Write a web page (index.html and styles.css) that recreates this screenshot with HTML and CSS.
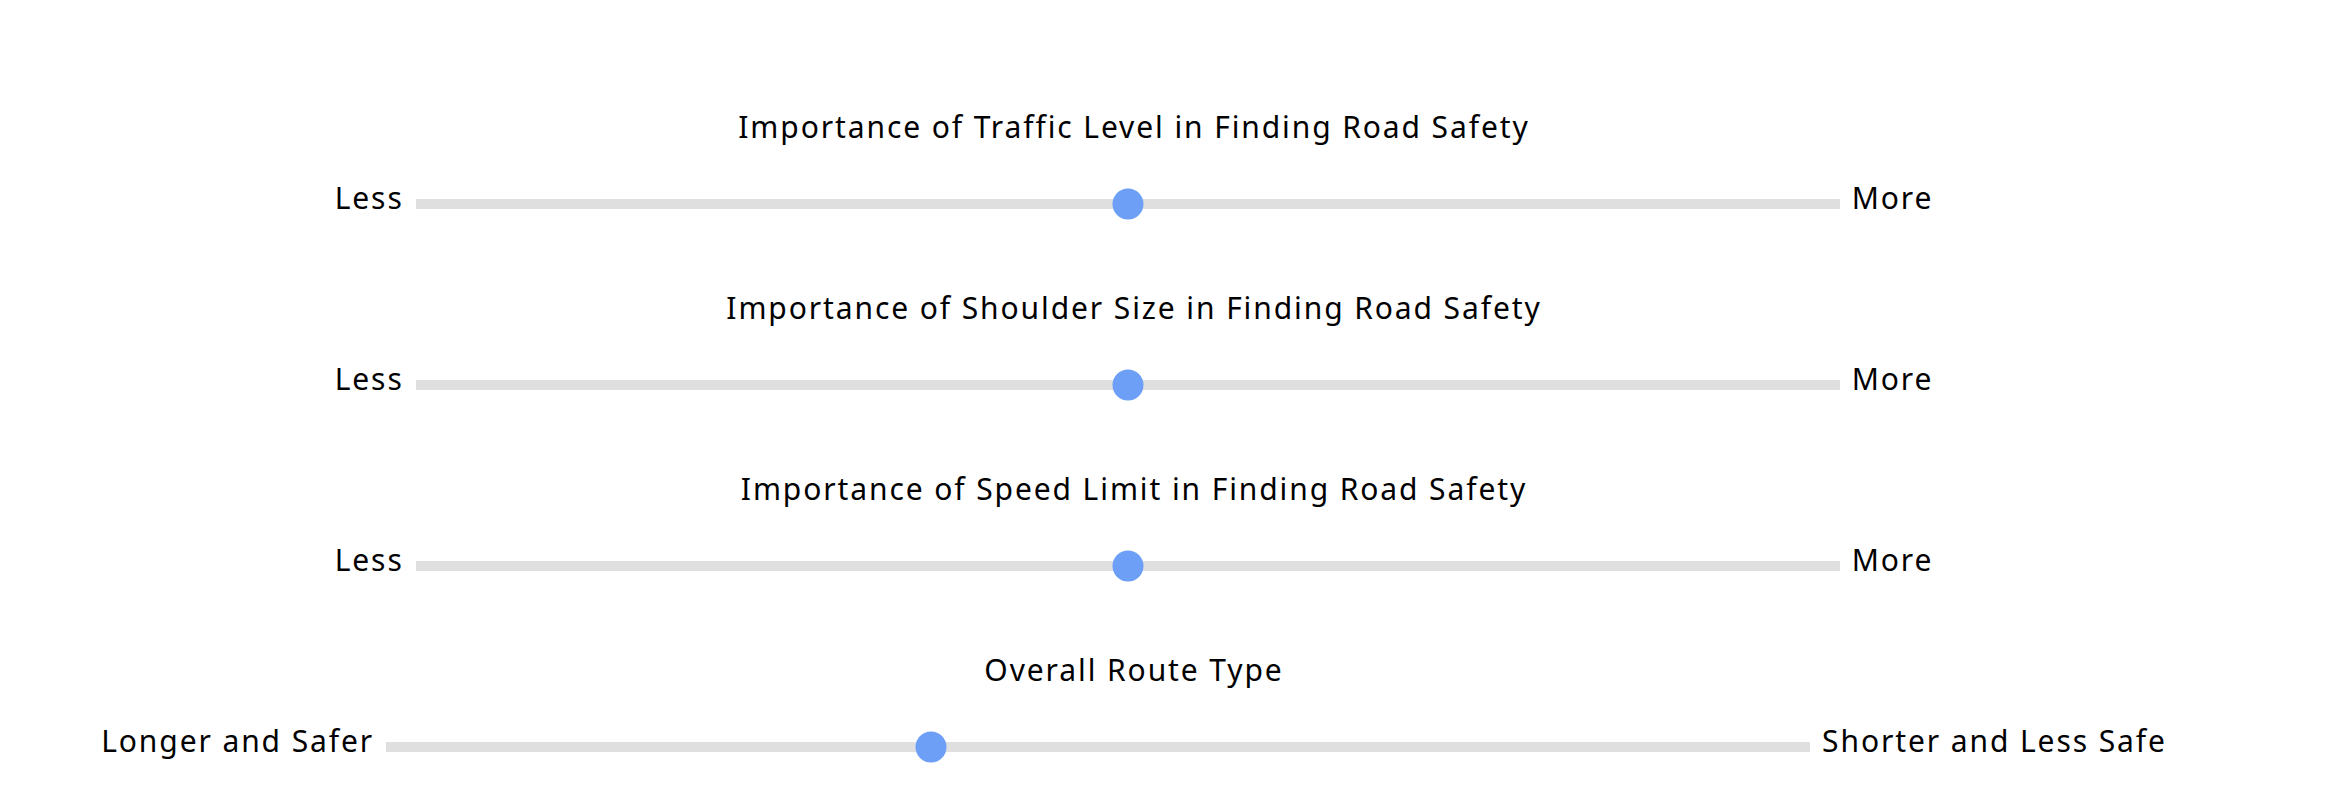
FILE: index.html
```html
<!DOCTYPE html>
<html lang="en">
<head>
<meta charset="utf-8">
<title>Route Preferences</title>
<link rel="stylesheet" href="styles.css">
</head>
<body>
<main class="page">
  <section class="setting">
    <h2 class="setting-title">Importance of Traffic Level in Finding Road Safety</h2>
    <div class="slider-row">
      <span class="end-label">Less</span>
      <div class="track"><span class="thumb" style="left:50%"></span></div>
      <span class="end-label">More</span>
    </div>
  </section>
  <section class="setting">
    <h2 class="setting-title">Importance of Shoulder Size in Finding Road Safety</h2>
    <div class="slider-row">
      <span class="end-label">Less</span>
      <div class="track"><span class="thumb" style="left:50%"></span></div>
      <span class="end-label">More</span>
    </div>
  </section>
  <section class="setting">
    <h2 class="setting-title">Importance of Speed Limit in Finding Road Safety</h2>
    <div class="slider-row">
      <span class="end-label">Less</span>
      <div class="track"><span class="thumb" style="left:50%"></span></div>
      <span class="end-label">More</span>
    </div>
  </section>
  <section class="setting">
    <h2 class="setting-title">Overall Route Type</h2>
    <div class="slider-row">
      <span class="end-label">Longer and Safer</span>
      <div class="track"><span class="thumb" style="left:38.25%"></span></div>
      <span class="end-label">Shorter and Less Safe</span>
    </div>
  </section>
</main>
</body>
</html>
```
FILE: styles.css
```css
html, body {
  margin: 0;
  padding: 0;
  background: #ffffff;
}

body {
  font-family: "Noto Sans", "Open Sans", sans-serif;
  color: #000000;
  letter-spacing: 1.9px;
}

.page {
  width: 2268px;
  padding-top: 107px;
  display: flex;
  flex-direction: column;
  align-items: center;
}

.setting {
  height: 181px;
  display: flex;
  flex-direction: column;
  align-items: center;
}

.setting-title {
  margin: 0;
  font-size: 30px;
  font-weight: 400;
  line-height: 40px;
  text-align: center;
}

.slider-row {
  margin-top: 41px;
  height: 32px;
  display: flex;
  align-items: center;
  gap: 12px;
}

.end-label {
  font-size: 30px;
  line-height: 40px;
  margin-bottom: 12px;
  white-space: nowrap;
}

.track {
  position: relative;
  width: 1424px;
  height: 10px;
  background: #dfdfdf;
}

.thumb {
  position: absolute;
  top: 50%;
  width: 31px;
  height: 31px;
  border-radius: 50%;
  background: #6e9ff7;
  transform: translate(-50%, -50%);
}
```
